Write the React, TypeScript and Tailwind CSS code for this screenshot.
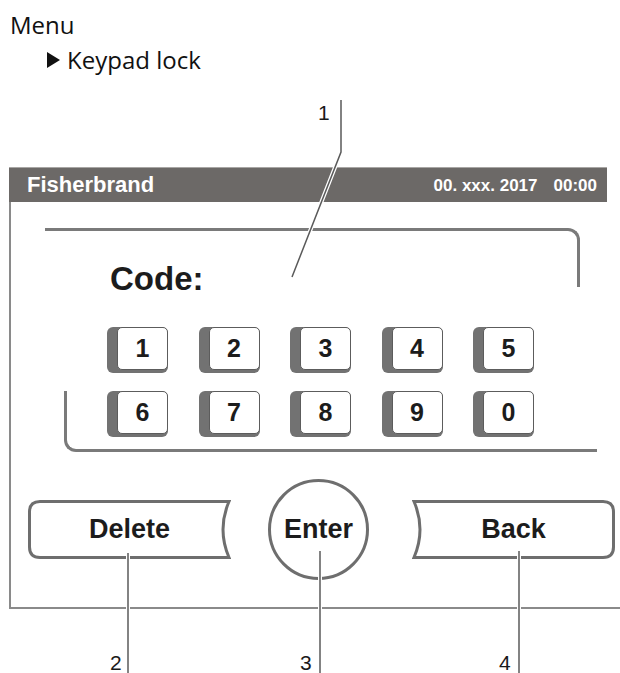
import React from "react";

const Key = ({ n }: { n: string }) => (
  <div className="w-[61px] h-[46px] bg-[#727272] rounded-[6px] pl-[10px] pb-[3px] flex">
    <div className="flex-1 bg-white border-[1.5px] border-[#5c5c5c] rounded-[5px] flex items-center justify-center text-[25px] font-bold leading-none text-[#1c1c1c]">
      {n}
    </div>
  </div>
);

const SideButton = ({ label, concave }: { label: string; concave: "left" | "right" }) => (
  <div className="relative w-[203px] h-[59px] flex items-center justify-center">
    <svg className="absolute inset-0" width="203" height="59" viewBox="0 0 203 59">
      {concave === "right" ? (
        <path
          d="M12 1.5 H201 Q189 29.5 201 57.5 H12 Q1.5 57.5 1.5 47 V12 Q1.5 1.5 12 1.5 Z"
          fill="white"
          stroke="#6e6e6e"
          strokeWidth="3"
        />
      ) : (
        <path
          d="M2 1.5 H191 Q201.5 1.5 201.5 12 V47 Q201.5 57.5 191 57.5 H2 Q14 29.5 2 1.5 Z"
          fill="white"
          stroke="#6e6e6e"
          strokeWidth="3"
        />
      )}
    </svg>
    <span className="relative text-[27px] font-bold leading-none text-[#1c1c1c]">{label}</span>
  </div>
);

export default function App() {
  return (
    <div
      className="relative w-[620px] h-[673px] bg-white overflow-hidden text-[#1a1a1a]"
      style={{ fontFamily: '"Liberation Sans", Arial, sans-serif' }}
    >
      {/* Breadcrumb */}
      <div
        className="h-[167px] pl-[10px] pt-[13px]"
        style={{ fontFamily: '"Open Sans", "Noto Sans", sans-serif' }}
      >
        <div className="text-[24px] leading-none text-[#111]">Menu</div>
        <div className="mt-[11px] ml-[37px] flex items-center gap-[7px]">
          <svg width="13" height="16" viewBox="0 0 13 16">
            <polygon points="0,0 13,8 0,16" fill="#111" />
          </svg>
          <span className="text-[24px] leading-none text-[#111]">Keypad lock</span>
        </div>
      </div>

      {/* Device screen */}
      <div className="ml-[9px] flex flex-col">
        <div className="w-[598px] h-[35px] bg-[#6c6967] border-t border-[#a8a6a4] flex items-center justify-between pl-[18px] pr-[10px] text-white font-bold">
          <span className="text-[22px] leading-none">Fisherbrand</span>
          <div className="flex gap-[16px] text-[17px] leading-none">
            <span>00. xxx. 2017</span>
            <span>00:00</span>
          </div>
        </div>
        <div className="w-[611px] border-l-2 border-b-2 border-[#8a8a8a] flex flex-col pt-[26px] pb-[27px]">
          {/* Code bracket */}
          <div className="ml-[34px] w-[535px] h-[59px] border-t-[3px] border-r-[3px] border-[#7a7a7a] rounded-tr-[12px] pl-[65px] pt-[31px]">
            <span className="text-[33px] font-bold leading-none text-[#1c1c1c]">Code:</span>
          </div>
          {/* Keypad row 1 */}
          <div className="mt-[40px] ml-[96px] flex gap-[30.5px]">
            {["1", "2", "3", "4", "5"].map((n) => (
              <Key key={n} n={n} />
            ))}
          </div>
          {/* Keypad row 2 with bracket */}
          <div className="mt-[18px] ml-[53px] w-[533px] border-l-[3px] border-b-[3px] border-[#7a7a7a] rounded-bl-[12px] pl-[40px] pb-[12px] flex gap-[30.5px]">
            {["6", "7", "8", "9", "0"].map((n) => (
              <Key key={n} n={n} />
            ))}
          </div>
          {/* Buttons */}
          <div className="mt-[27px] ml-[17px] flex items-center">
            <SideButton label="Delete" concave="right" />
            <div className="ml-[37px] w-[101px] h-[101px] rounded-full border-[3px] border-[#6e6e6e] flex items-center justify-center">
              <span className="text-[27px] font-bold leading-none text-[#1c1c1c]">Enter</span>
            </div>
            <div className="ml-[43px]">
              <SideButton label="Back" concave="left" />
            </div>
          </div>
        </div>
      </div>

      {/* Callouts */}
      <svg className="absolute inset-0 pointer-events-none" width="620" height="673" viewBox="0 0 620 673">
        <g fill="none" stroke="white" strokeWidth="4">
          <polyline points="341,100 341,152 292,277" />
          <line x1="128" y1="553" x2="128" y2="673" />
          <line x1="320" y1="551" x2="320" y2="673" />
          <line x1="519" y1="551" x2="519" y2="673" />
        </g>
        <g fill="none" stroke="#5a5a5a" strokeWidth="1.5">
          <polyline points="341,100 341,152 292,277" />
          <line x1="128" y1="553" x2="128" y2="673" />
          <line x1="320" y1="551" x2="320" y2="673" />
          <line x1="519" y1="551" x2="519" y2="673" />
        </g>
      </svg>
      <span className="absolute left-[318px] top-[102px] text-[21px] leading-none">1</span>
      <span className="absolute left-[110px] top-[652px] text-[21px] leading-none">2</span>
      <span className="absolute left-[300px] top-[652px] text-[21px] leading-none">3</span>
      <span className="absolute left-[499px] top-[652px] text-[21px] leading-none">4</span>
    </div>
  );
}
